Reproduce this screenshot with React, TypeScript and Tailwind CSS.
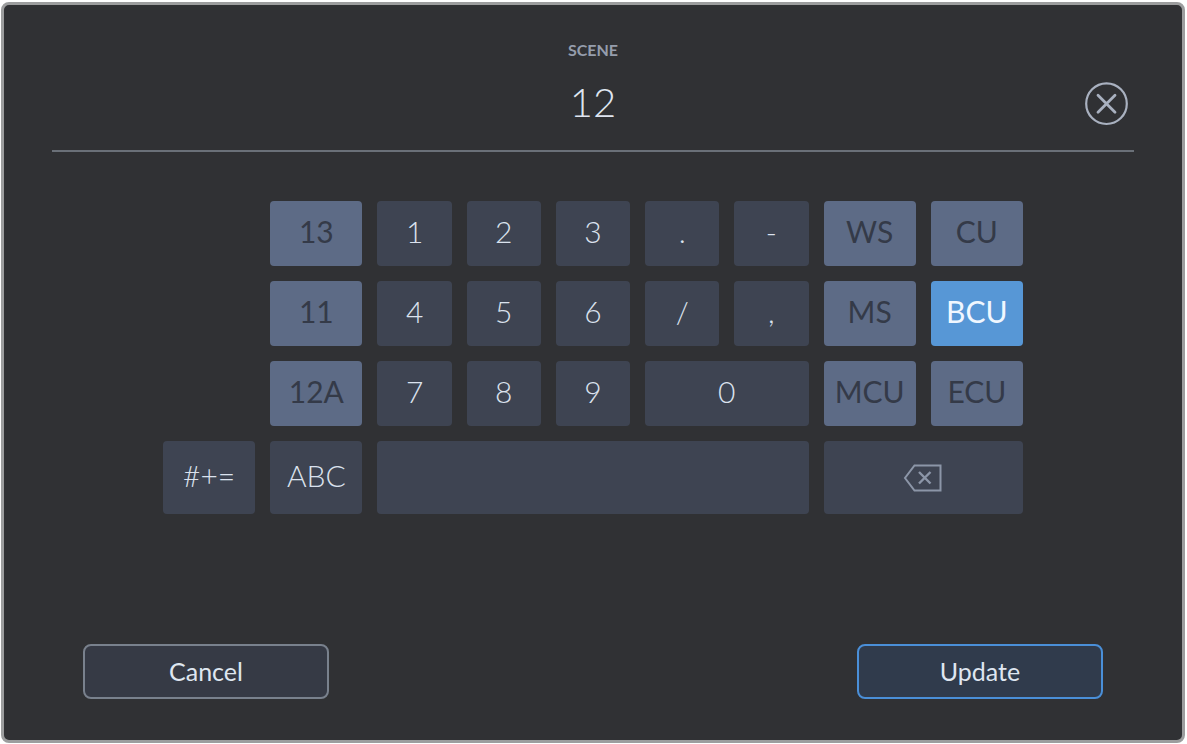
import { useState } from "react";
import clsx from "clsx";

type KeyKind = "plain" | "suggestion" | "mode";

interface KeyDef {
  label: string;
  kind: KeyKind;
  className?: string;
}

const KEYS: KeyDef[] = [
  { label: "13", kind: "suggestion", className: "col-start-2" },
  { label: "1", kind: "plain" },
  { label: "2", kind: "plain" },
  { label: "3", kind: "plain" },
  { label: ".", kind: "plain" },
  { label: "-", kind: "plain" },
  { label: "WS", kind: "suggestion" },
  { label: "CU", kind: "suggestion" },

  { label: "11", kind: "suggestion", className: "col-start-2" },
  { label: "4", kind: "plain" },
  { label: "5", kind: "plain" },
  { label: "6", kind: "plain" },
  { label: "/", kind: "plain" },
  { label: ",", kind: "plain" },
  { label: "MS", kind: "suggestion" },
  { label: "BCU", kind: "suggestion" },

  { label: "12A", kind: "suggestion", className: "col-start-2" },
  { label: "7", kind: "plain" },
  { label: "8", kind: "plain" },
  { label: "9", kind: "plain" },
  { label: "0", kind: "plain", className: "col-span-2" },
  { label: "MCU", kind: "suggestion" },
  { label: "ECU", kind: "suggestion" },

  { label: "#+=", kind: "mode" },
  { label: "ABC", kind: "mode" },
];

const SHOT_TYPES = ["WS", "CU", "MS", "BCU", "MCU", "ECU"];

function ClearIcon() {
  return (
    <svg viewBox="0 0 44 44" className="h-11 w-11" fill="none" stroke="currentColor" strokeWidth="2.2">
      <circle cx="22.5" cy="21.7" r="20.3" />
      <path d="M14 13.2 31 30.2M31 13.2 14 30.2" strokeWidth="2.8" strokeLinecap="round" />
    </svg>
  );
}

function BackspaceIcon() {
  return (
    <svg viewBox="0 0 40 28" className="h-7 w-10" fill="none" stroke="currentColor" strokeWidth="2">
      <path d="M11.5 1.5H37.5V26.5H11.5L2 14Z" />
      <path d="M16 8 27.5 19.5M27.5 8 16 19.5" strokeWidth="2.4" />
    </svg>
  );
}

export default function App() {
  const [scene, setScene] = useState("12");
  const [shotType, setShotType] = useState("BCU");

  const handleKey = (key: KeyDef): void => {
    if (key.kind === "mode") return;
    if (SHOT_TYPES.includes(key.label)) {
      setShotType(key.label);
    } else if (key.kind === "suggestion") {
      setScene(key.label);
    } else {
      setScene((prev) => prev + key.label);
    }
  };

  return (
    <div className="flex min-h-screen bg-white pt-0.5 pr-0.5 pb-px pl-px font-['Lato',sans-serif]">
      <form
        className="flex flex-1 flex-col rounded-lg border-3 border-[#9c9d9e] bg-[#303134] pt-[35px] pb-[41px]"
        onSubmit={(e) => e.preventDefault()}
      >
        {/* Scene field */}
        <div className="mx-12 flex flex-col border-b-2 border-[#6a7078] pb-6">
          <label htmlFor="scene" className="self-center text-base leading-5 font-bold text-[#959dac]">
            SCENE
          </label>
          <div className="mt-[22px] grid grid-cols-[44px_1fr_44px] px-1.5">
            <input
              id="scene"
              type="text"
              value={scene}
              onChange={(e) => setScene(e.target.value)}
              className="col-start-2 h-11 min-w-0 bg-transparent pb-1 text-center text-[40px] leading-10 font-light text-[#dfe5f0] focus:outline-none"
            />
            <button type="button" aria-label="Clear" onClick={() => setScene("")} className="text-[#a9b1c0]">
              <ClearIcon />
            </button>
          </div>
        </div>

        {/* Keypad */}
        <div className="mx-auto mt-[49px] grid w-full max-w-[860px] grid-cols-[92fr_92fr_repeat(5,74fr)_92fr_92fr] grid-rows-[65px_65px_65px_73px] gap-[15px] text-[30px] leading-9">
          {KEYS.map((key) => (
            <button
              key={key.label}
              type="button"
              onClick={() => handleKey(key)}
              className={clsx(
                "rounded-sm pb-1.5",
                key.kind !== "suggestion" && "bg-[#3e4452] font-light text-[#dbe2ee]",
                key.kind === "suggestion" && key.label !== shotType && "bg-[#5d6b86] text-[#343a48]",
                key.label === shotType && "bg-[#5797d6] text-[#f0f7ff]",
                key.className,
              )}
            >
              {key.label}
            </button>
          ))}
          <button
            type="button"
            aria-label="Space"
            onClick={() => setScene((prev) => prev + " ")}
            className="col-span-5 rounded-sm bg-[#3e4452]"
          />
          <button
            type="button"
            aria-label="Backspace"
            onClick={() => setScene((prev) => prev.slice(0, -1))}
            className="col-span-2 flex items-center justify-center rounded-sm bg-[#3e4452] text-[#8c96a8]"
          >
            <BackspaceIcon />
          </button>
        </div>

        {/* Footer */}
        <div className="mt-auto flex justify-between px-[79px] pt-10 text-[25px] leading-8 text-[#dfe6f0]">
          <button type="button" className="h-[55px] w-[246px] rounded-lg border-2 border-[#79818d] bg-[#363a45] pb-0.5">
            Cancel
          </button>
          <button type="submit" className="h-[55px] w-[246px] rounded-lg border-2 border-[#4a8fd8] bg-[#303b4c] pb-0.5">
            Update
          </button>
        </div>
      </form>
    </div>
  );
}
